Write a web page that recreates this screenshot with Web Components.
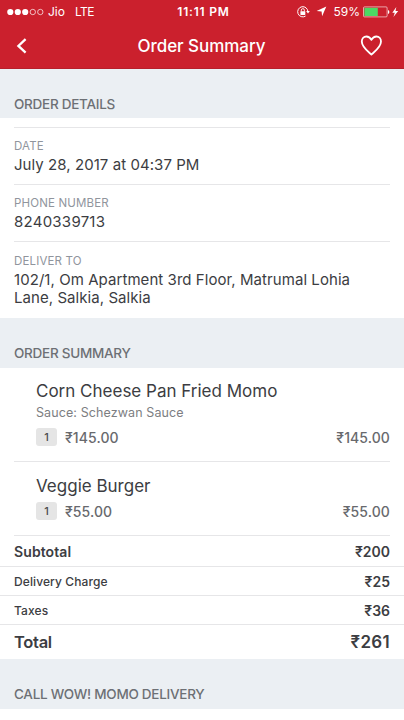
<!DOCTYPE html>
<html lang="en">
<head>
<meta charset="utf-8">
<title>Order Summary</title>
<style>
body{margin:0;background:#fff;font-family:Inter,"Liberation Sans",sans-serif;color:#3c3d42;overflow:hidden}
</style>
</head>
<body>
<order-page></order-page>
<script>
const define = (name, html) => {
  const template = document.createElement('template');
  template.innerHTML = '<style>*{box-sizing:border-box}:host{box-sizing:border-box;white-space:nowrap}</style>' + html;
  customElements.define(name, class extends HTMLElement {
    constructor() {
      super();
      this.attachShadow({ mode: 'open' }).append(template.content.cloneNode(true));
    }
  });
};

define('status-bar', `
<style>
:host{display:grid;grid-template-columns:1fr auto 1fr;align-items:center;height:23px;padding:0 5px 0 7px;color:#fff;font-size:12px;line-height:16px}
div{display:flex;align-items:center}
.time{font-weight:600;font-size:12px;letter-spacing:.8px;font-feature-settings:"kern" 0;padding-left:1px}
.right{justify-content:flex-end}
svg{display:block;flex:none}
</style>
<div><svg width="37" height="8" viewBox="0 0 37 8"><g fill="#fff"><circle cx="3.3" cy="4" r="3.1"/><circle cx="10.8" cy="4" r="3.1"/><circle cx="18.2" cy="4" r="3.1"/></g><g fill="none" stroke="#fff" stroke-opacity=".85" stroke-width=".8"><circle cx="25.8" cy="4" r="2.7"/><circle cx="33.3" cy="4" r="2.7"/></g></svg><span style="margin-left:4px">Jio</span><span style="margin-left:10px;letter-spacing:-.5px">LTE</span></div>
<div class="time">11:11 PM</div>
<div class="right">
<svg width="13" height="12" viewBox="0 0 13 12"><path d="M10.9 5.8A5.1 5.1 0 1 0 8.5 10.1" fill="none" stroke="#fff" stroke-width="1"/><path d="M9.1 5.1h3.7L11 7.5z" fill="#fff"/><rect x="3.4" y="5.2" width="4.9" height="3.7" rx=".4" fill="#fff"/><path d="M4.3 5.4V4.2a1.55 1.55 0 0 1 3.1 0v1.2" fill="none" stroke="#fff" stroke-width=".9"/></svg>
<svg style="margin-left:6px" width="11" height="11" viewBox="0 0 11 11"><path d="M10.3.6 6.1 10.3 5.6 5.4.6 4.9z" fill="#fff"/></svg>
<span style="margin-left:6px">59%</span>
<svg style="margin-left:3px" width="36" height="12" viewBox="0 0 36 12"><rect x=".5" y=".9" width="23.6" height="10" rx="1" fill="none" stroke="#fff" stroke-opacity=".75" stroke-width=".8"/><rect x="1.4" y="1.8" width="13.4" height="8.2" fill="#4cd964"/><path d="M25 4v4q1.4-.4 1.4-2T25 4z" fill="#fff"/><path d="M33.3 1 29.3 6.8h2.5L30.4 11l4.8-6h-2.7z" fill="#fff"/></svg>
</div>`);

define('nav-bar', `
<style>
:host{display:grid;grid-template-columns:32px 1fr 32px;align-items:center;height:46px;padding:0 17px 0 7px;color:#fff;border-bottom:1px solid #b71f2b}
h1{margin:0;font-size:17px;font-weight:500;line-height:22px;letter-spacing:-.04px;text-align:center;padding-left:9px}
svg{display:block}
</style>
<svg width="32" height="24" viewBox="0 0 32 24"><path d="M18.6 5.2 11.4 11.9l7.2 6.8" fill="none" stroke="#fff" stroke-width="2.3"/></svg>
<h1><slot></slot></h1>
<svg width="32" height="24" viewBox="0 0 32 24"><path d="M16.4 20.6C12.5 17.2 6.8 13.2 6.8 7.6c0-3 2-5.1 4.6-5.1 2.1 0 3.8 1.2 5 3.4 1.2-2.2 2.9-3.4 5-3.4 2.6 0 4.6 2.1 4.6 5.1 0 5.6-5.7 9.6-9.6 13z" fill="none" stroke="#fff" stroke-width="1.8" stroke-linejoin="round"/></svg>`);

define('section-title', `
<style>
:host{display:block;height:49px;padding:26px 14px 0;background:#ebeff3;color:#6d7075;font-size:13.5px;font-weight:500;line-height:18px;letter-spacing:-.27px}
</style><slot></slot>`);

define('detail-field', `
<style>
:host{display:flex;flex-direction:column;gap:2px;height:57px;margin:0 14px;padding-top:10px;border-top:1px solid #e6e6e8}
.label{font-size:11.5px;line-height:16px;letter-spacing:.16px;color:#90959d}
.value{font-size:15px;line-height:18px;letter-spacing:var(--track,.06px)}
</style>
<div class="label"><slot name="label"></slot></div><div class="value"><slot></slot></div>`);

define('order-item', `
<style>
:host{display:block;margin:0 14px;padding:0 0 0 22px;border-bottom:1px solid #e6e6e8}
.name{font-size:17px;line-height:22px;letter-spacing:0}
.note{font-size:12.5px;line-height:18px;letter-spacing:.1px;color:#7d7e82}
.note ::slotted(*){display:block;padding:2px 0 1px}
.row{display:flex;align-items:center;height:18px;margin-top:5px;color:#68696d;font-size:14px;font-weight:500;letter-spacing:.1px}
.qty{width:21px;height:18px;border-radius:3px;background:#e5e5e5;color:#4b4b4e;font-size:11px;line-height:18px;text-align:center}
.price{margin-left:8px}
.sum{margin-left:auto}
</style>
<div class="name"><slot name="name"></slot></div><div class="note"><slot name="note"></slot></div>
<div class="row"><span class="qty"><slot name="qty"></slot></span><span class="price"><slot name="price"></slot></span><span class="sum"><slot name="sum"></slot></span></div>`);

define('total-row', `
<style>
:host{display:flex;justify-content:space-between;align-items:center;height:29px;padding:0 14px;border-bottom:1px solid #e6e6e8;font-size:12px;font-weight:500;letter-spacing:.1px}
.amount{font-size:14px;font-weight:600;letter-spacing:0}
:host([kind=subtotal]){height:31px;font-size:14px;font-weight:600}
:host([kind=total]){height:34px;border:0;font-size:16.5px;font-weight:600;letter-spacing:-.3px}
:host([kind=total]) .amount{font-size:17px;letter-spacing:.3px}
</style>
<span><slot></slot></span><span class="amount"><slot name="amount"></slot></span>`);

define('order-page', `
<style>
:host{display:flex;flex-direction:column;width:404px;height:720px;overflow:hidden}
header{background:#cb202d;height:69px;flex:none}
section-title,detail-field,order-item,total-row{flex:none}
</style>
<header><status-bar></status-bar><nav-bar>Order Summary</nav-bar></header>
<section-title>ORDER DETAILS</section-title>
<detail-field style="margin-top:9px"><span slot="label">DATE</span>July 28, 2017 at 04:37 PM</detail-field>
<detail-field style="--track:.25px"><span slot="label">PHONE NUMBER</span>8240339713</detail-field>
<detail-field style="height:77px;padding-top:11px"><span slot="label">DELIVER TO</span>102/1, Om Apartment 3rd Floor, Matrumal Lohia<br>Lane, Salkia, Salkia</detail-field>
<section-title style="height:50px">ORDER SUMMARY</section-title>
<order-item style="height:94px;padding-top:12px"><span slot="name">Corn Cheese Pan Fried Momo</span><span slot="note">Sauce: Schezwan Sauce</span><span slot="qty">1</span><span slot="price">₹145.00</span><span slot="sum">₹145.00</span></order-item>
<order-item style="height:74px;padding-top:13px"><span slot="name">Veggie Burger</span><span slot="qty">1</span><span slot="price">₹55.00</span><span slot="sum">₹55.00</span></order-item>
<total-row kind="subtotal">Subtotal<span slot="amount">₹200</span></total-row>
<total-row>Delivery Charge<span slot="amount">₹25</span></total-row>
<total-row>Taxes<span slot="amount">₹36</span></total-row>
<total-row kind="total">Total<span slot="amount">₹261</span></total-row>
<section-title style="height:50px">CALL WOW! MOMO DELIVERY</section-title>`);
</script>
</body>
</html>
